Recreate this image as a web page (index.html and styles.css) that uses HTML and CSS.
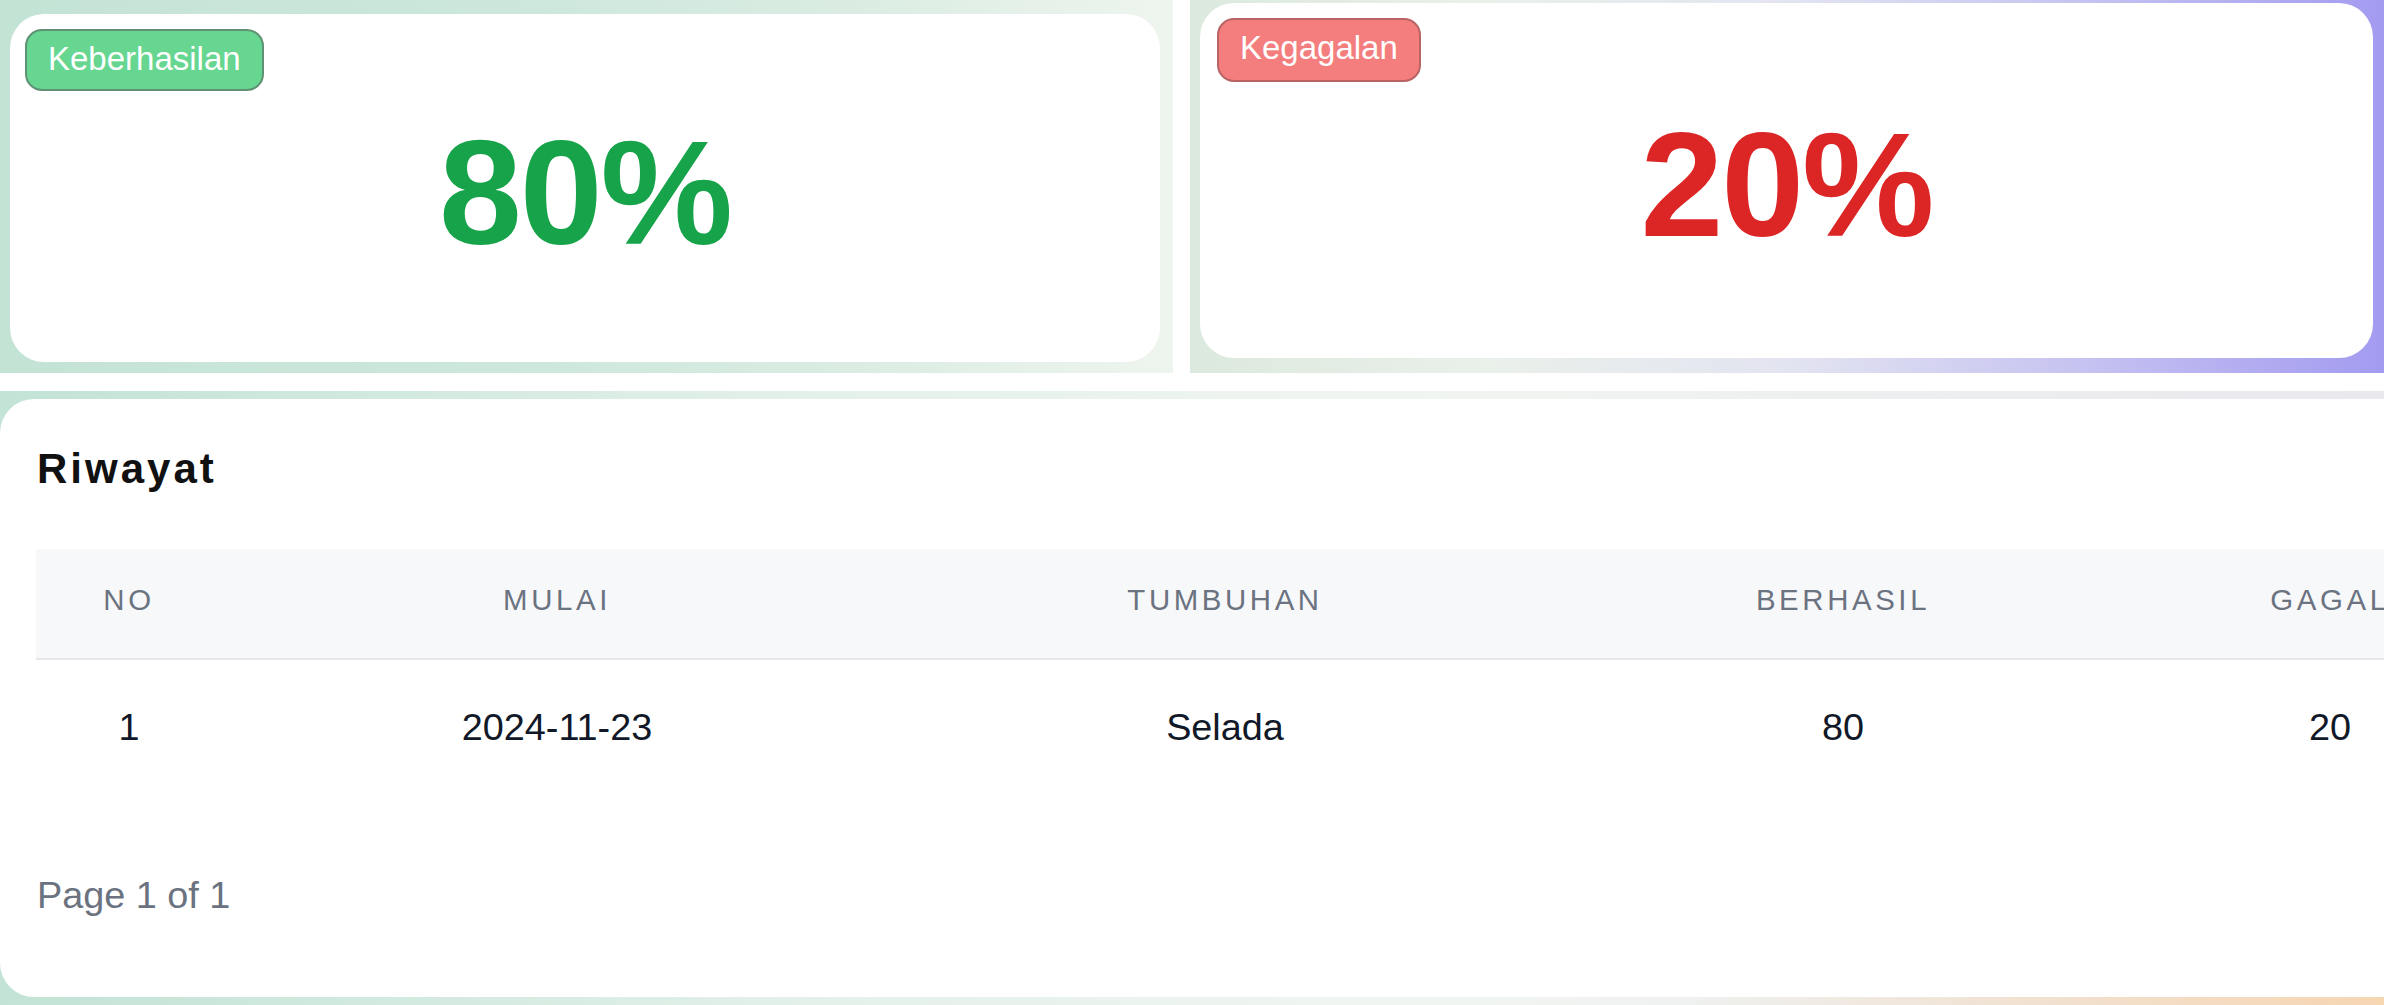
FILE: index.html
```html
<!DOCTYPE html>
<html lang="id">
<head>
<meta charset="utf-8">
<title>Riwayat</title>
<link rel="stylesheet" href="styles.css">
</head>
<body>
<div class="page">
  <div class="stats">
    <div class="panel panel-success">
      <div class="card">
        <span class="badge badge-success">Keberhasilan</span>
        <div class="big big-success">80%</div>
      </div>
    </div>
    <div class="panel panel-fail">
      <div class="card">
        <span class="badge badge-fail">Kegagalan</span>
        <div class="big big-fail">20%</div>
      </div>
    </div>
  </div>
  <div class="panel panel-history">
    <div class="history">
      <h2 class="title">Riwayat</h2>
      <table class="table">
        <colgroup>
          <col class="c1"><col class="c2"><col class="c3"><col class="c4"><col class="c5">
        </colgroup>
        <thead>
          <tr><th>No</th><th>Mulai</th><th>Tumbuhan</th><th>Berhasil</th><th>Gagal</th></tr>
        </thead>
        <tbody>
          <tr><td>1</td><td>2024-11-23</td><td>Selada</td><td>80</td><td>20</td></tr>
        </tbody>
      </table>
      <div class="pager">Page 1 of 1</div>
    </div>
  </div>
</div>
</body>
</html>
```
FILE: styles.css
```css
html, body {
  margin: 0;
  padding: 0;
  background: #ffffff;
  overflow: hidden;
}
body {
  font-family: "Liberation Sans", Arial, sans-serif;
  color: #111827;
  width: 2384px;
  height: 1005px;
}
.page {
  display: flex;
  flex-direction: column;
  gap: 18px;
}
.stats {
  display: flex;
  gap: 17px;
  height: 373px;
}
.panel {
  box-sizing: border-box;
}
.panel-success {
  width: 1173px;
  padding: 14px 13px 11px 10px;
  background: linear-gradient(to right, #c3e3d5 0%, #cde7dc 45%, #dcede3 75%, #eef5ee 100%);
}
.panel-fail {
  width: 1194px;
  padding: 3px 11px 15px 10px;
  background: linear-gradient(to right, #dce9de 0%, #eaf0ea 25%, #e3e4f1 50%, #c6c2f1 75%, #a39bf0 100%);
}
.card {
  position: relative;
  height: 100%;
  background: #ffffff;
  border-radius: 34px;
  display: flex;
  align-items: center;
  justify-content: center;
}
.badge {
  position: absolute;
  top: 15px;
  left: 15px;
  box-sizing: border-box;
  height: 62px;
  padding: 4px 21px 0;
  border: 2px solid;
  border-radius: 17px;
  font-size: 33px;
  line-height: 48px;
  color: #ffffff;
}
.badge-success {
  background: #66d690;
  border-color: #5f9274;
}
.badge-fail {
  left: 17px;
  background: #f47d7d;
  border-color: #b96464;
  height: 64px;
}
.big {
  font-size: 149px;
  font-weight: 700;
  line-height: 1;
  letter-spacing: -2px;
  padding-top: 8px;
}
.big-success { color: #16a34a; }
.big-fail { color: #dc2626; }

.panel-history {
  height: 614px;
  padding: 8px 0 8px 0;
  background:
    radial-gradient(ellipse 700px 500px at 100% 100%, rgba(247, 214, 178, 1) 0%, rgba(247, 214, 178, 0) 100%),
    linear-gradient(to right, #c2e3d5 0%, #e4f1ea 35%, #f1f5f1 60%, #e9e8ee 100%);
}
.history {
  box-sizing: border-box;
  width: 2560px;
  height: 598px;
  background: #ffffff;
  border-radius: 34px;
  padding: 45px 0 0 37px;
}
.title {
  margin: 0;
  font-size: 42px;
  line-height: 50px;
  font-weight: 700;
  letter-spacing: 3px;
  color: #111111;
}
.table {
  margin-top: 55px;
  border-collapse: collapse;
  table-layout: fixed;
  width: 2496px;
  margin-left: -1px;
}
.c1 { width: 186px; }
.c2 { width: 670px; }
.c3 { width: 666px; }
.c4 { width: 570px; }
.c5 { width: 404px; }
.table th {
  background: #f7f8fa;
  border-bottom: 2px solid #e5e7eb;
  padding: 34px 0 41px;
  font-size: 29.4px;
  line-height: 34px;
  font-weight: 400;
  text-transform: uppercase;
  letter-spacing: 3.6px;
  color: #6b7280;
  text-align: center;
}
.table td {
  padding: 45px 0;
  font-size: 37.8px;
  line-height: 44px;
  text-align: center;
  color: #111827;
}
.pager {
  margin-top: 79px;
  font-size: 37.8px;
  line-height: 44px;
  color: #6b7280;
}
```
